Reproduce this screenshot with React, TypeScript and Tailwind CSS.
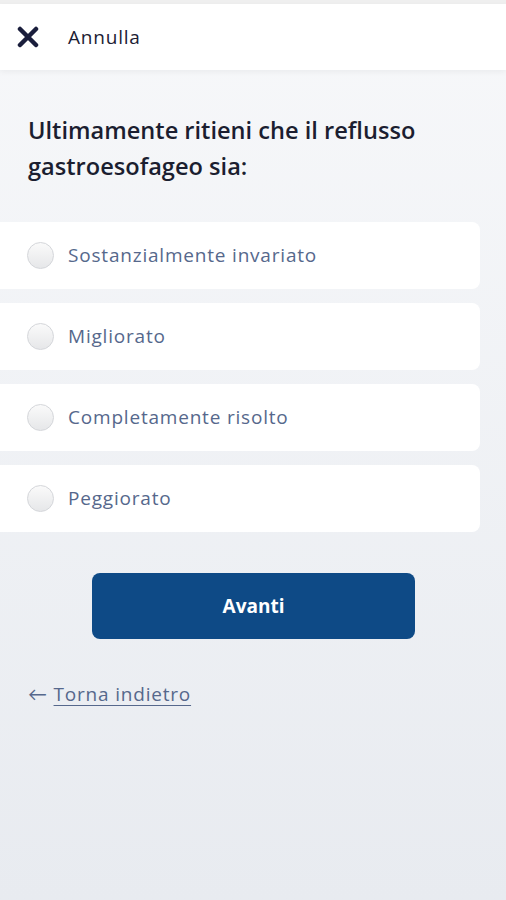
import React from "react";

const options = [
  "Sostanzialmente invariato",
  "Migliorato",
  "Completamente risolto",
  "Peggiorato",
];

export default function App() {
  return (
    <div
      className="min-h-[900px] w-[506px] bg-gradient-to-b from-[#f7f8fa] to-[#e8ebf0] flex flex-col"
      style={{ fontFamily: "'Open Sans', Lato, sans-serif" }}
    >
      <div className="h-[4px] bg-[#efefef]" />
      <div className="h-[66px] bg-white flex items-center shadow-[0_2px_6px_rgba(0,0,0,0.05)]">
        <svg width="22" height="22" viewBox="0 0 22 22" className="ml-[17px]">
          <path d="M3 3 L19 19 M19 3 L3 19" stroke="#1a1e3c" strokeWidth="4.5" strokeLinecap="round" />
        </svg>
        <span className="ml-[29px] text-[19px] tracking-[0.8px] text-[#1c2033]">Annulla</span>
      </div>
      <h1 className="mt-[42px] px-[28px] text-[23.6px] leading-[36px] font-semibold text-[#1b1e30]">
        Ultimamente ritieni che il reflusso gastroesofageo sia:
      </h1>
      <div className="mt-[38px] flex flex-col gap-[14px] w-[480px]">
        {options.map((o) => (
          <div key={o} className="h-[67px] bg-white rounded-r-[8px] flex items-center">
            <div className="ml-[27px] w-[27px] h-[27px] rounded-full border border-[#d4d6da] bg-gradient-to-b from-[#fafafa] to-[#e6e7e9]" />
            <span className="ml-[14px] text-[19px] tracking-[0.8px] text-[#56688c]">{o}</span>
          </div>
        ))}
      </div>
      <div className="mt-[41px] flex justify-center">
        <button className="w-[323px] h-[66px] rounded-[8px] bg-[#0e4a86] text-white text-[19px] font-bold ml-[1px]">
          Avanti
        </button>
      </div>
      <div className="mt-[41px] px-[28px] text-[19px] tracking-[0.8px] text-[#56688c]">
        <span>← </span>
        <span className="underline underline-offset-[4px]">Torna indietro</span>
      </div>
    </div>
  );
}
